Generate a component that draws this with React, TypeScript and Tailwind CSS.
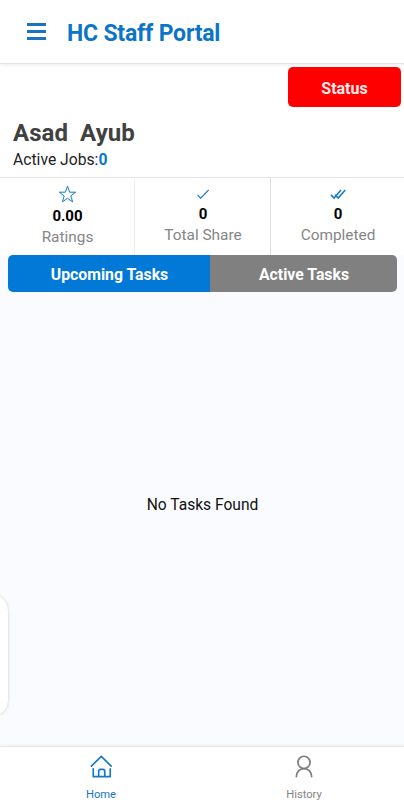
import type { ReactNode } from "react";

function StarIcon() {
  return (
    <svg className="h-[19px] w-[19px]" viewBox="0 0 19 19" fill="none" stroke="#1779c8">
      <path d="M9.5 1.2l2.1 6h6.1l-4.9 3.7 1.8 6-5.1-3.6-5.1 3.6 1.8-6-4.9-3.7h6.1z" />
    </svg>
  );
}

function CheckIcon() {
  return (
    <svg className="h-4 w-4" viewBox="0 0 16 16" fill="none" stroke="#1779c8" strokeWidth="1.2">
      <path d="M2.5 8.8l3.2 3.3 8-8.3" />
    </svg>
  );
}

function DoubleCheckIcon() {
  return (
    <svg className="h-4 w-4" viewBox="0 0 16 16" fill="none" stroke="#1779c8" strokeWidth="1.6">
      <path d="M0.8 8.8l3.2 3.2 7-8M5 8.8l3.2 3.2 7-8" />
    </svg>
  );
}

function HomeIcon() {
  return (
    <svg className="h-[26px] w-[26px]" viewBox="0 0 26 26" fill="none" stroke="#1676d2" strokeWidth="1.8" strokeLinecap="round" strokeLinejoin="round">
      <path d="M2.6 12L13.3 1.5 24 12" />
      <path d="M4.6 15v8.5h18.4V15M10.5 23.5v-6q0-2 2-2h2.6q2 0 2 2v6" />
    </svg>
  );
}

function PersonIcon() {
  return (
    <svg className="h-[26px] w-[26px]" viewBox="0 0 26 26" fill="none" stroke="#7b7b7b" strokeWidth="1.8" strokeLinecap="round">
      <circle cx="13" cy="8" r="6.6" />
      <path d="M4.7 23.5c0-4.9 3.7-8.8 8.3-8.8s8.3 3.9 8.3 8.8" />
    </svg>
  );
}

function Stat({ icon, value, label, className = "" }: { icon: ReactNode; value: string; label: string; className?: string }) {
  return (
    <div className={`flex flex-col items-center pl-px ${className}`}>
      {icon}
      <p className="mt-[3px] text-[15px] leading-[18px] font-bold text-black">{value}</p>
      <p className="mt-[2px] text-[15.4px] leading-5 text-[#858585]">{label}</p>
    </div>
  );
}

export default function App() {
  return (
    <div className="relative flex h-[800px] w-[404px] flex-col overflow-hidden bg-[#fafbff] font-['Roboto',sans-serif]">
      <header className="z-10 flex h-16 shrink-0 items-center border-b border-[#e5e5e5] bg-white pl-[27px] shadow-[0_1px_3px_rgba(0,0,0,0.08)]">
        <button className="flex w-[19px] flex-col gap-1" aria-label="Menu">
          <span className="h-[3px] bg-[#1874c3]" />
          <span className="h-[3px] bg-[#1874c3]" />
          <span className="h-[3px] bg-[#1874c3]" />
        </button>
        <h1 className="mt-1 ml-[21px] text-[23px] leading-7 font-bold tracking-[-0.2px] text-[#0b75c9]">HC Staff Portal</h1>
      </header>

      <section className="h-[114px] shrink-0 border-b border-[#e5e5e5] bg-white">
        <div className="flex justify-end pt-[3px] pr-[3px]">
          <button className="h-10 w-[113px] rounded-[5px] bg-[#ff0000] pt-[3px] text-base font-bold text-[#ffe9e9]">Status</button>
        </div>
        <h2 className="mt-3 pl-[13px] text-2xl leading-7 font-bold tracking-[0.05px] whitespace-pre text-[#414141]">{"Asad  Ayub"}</h2>
        <p className="mt-[3px] pl-[13px] text-[15.7px] leading-5 text-[#222]">
          Active Jobs:<span className="font-bold text-[#0878cf]">0</span>
        </p>
      </section>

      <section className="flex h-[77px] shrink-0 bg-white">
        <Stat icon={<StarIcon />} value="0.00" label="Ratings" className="w-[135px] border-r border-[#eeeeee] pt-[7px]" />
        <Stat icon={<CheckIcon />} value="0" label="Total Share" className="w-[136px] border-r border-[#dddddd] pt-2" />
        <Stat icon={<DoubleCheckIcon />} value="0" label="Completed" className="flex-1 pt-2" />
      </section>

      <div className="mr-[7px] ml-2 flex h-[37px] shrink-0 overflow-hidden rounded-[5px] text-[15.8px] font-bold text-white">
        <button className="w-[202px] bg-[#0278d7] pt-[2px] pl-px">Upcoming Tasks</button>
        <button className="flex-1 bg-[#808080] pt-[2px] pl-px">Active Tasks</button>
      </div>

      <main className="flex flex-1 justify-center pt-[203px] pl-px text-[15.6px] leading-5 text-[#111]">
        <p>No Tasks Found</p>
      </main>

      {/* edge panel handle */}
      <div className="absolute top-[594px] -left-6 h-[123px] w-[33px] rounded-[18px] border border-[#e6e8ec] bg-white shadow-[0_0_3px_rgba(0,0,0,0.08)]" />

      <nav className="flex h-[54px] shrink-0 border-t border-[#e9e9eb] bg-white text-[11.2px] leading-[14px] shadow-[0_-1px_2px_rgba(0,0,0,0.05)]">
        <a className="flex w-[202px] flex-col items-center pt-2 text-[#1676c6]">
          <HomeIcon />
          <span className="mt-[7px] translate-y-0.5">Home</span>
        </a>
        <a className="flex flex-1 flex-col items-center pt-2 pl-0.5 text-[#858585]">
          <PersonIcon />
          <span className="mt-[7px] translate-y-0.5">History</span>
        </a>
      </nav>
    </div>
  );
}
